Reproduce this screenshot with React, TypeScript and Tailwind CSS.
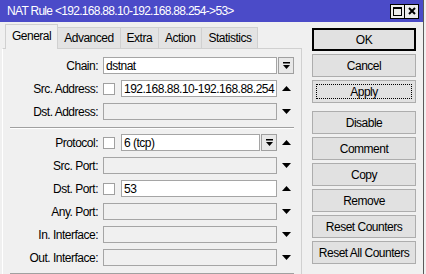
const Up = () => (
  <svg width="9" height="5" viewBox="0 0 9 5">
    <path d="M4.5 0L9 5H0z" fill="#000" />
  </svg>
);

const Down = () => (
  <svg width="9" height="5" viewBox="0 0 9 5">
    <path d="M0 0H9L4.5 5z" fill="#000" />
  </svg>
);

const DropBtn = () => (
  <div className="w-[16px] h-[17px] ml-[1px] border border-[#a0a0a0] bg-[#e8e8e8] flex items-center justify-center shrink-0">
    <svg width="7" height="8" viewBox="0 0 7 8">
      <rect x="0" y="0" width="7" height="1.5" fill="#000" />
      <path d="M0 3H7L3.5 7z" fill="#000" />
    </svg>
  </div>
);

type RowProps = {
  label: string;
  check?: boolean;
  value?: string;
  disabled?: boolean;
  drop?: boolean;
  side?: "up" | "down" | "drop";
};

const Row = ({ label, check, value, disabled, drop, side }: RowProps) => (
  <div className="flex items-center h-[17px]">
    <div className="w-[95px] text-right whitespace-nowrap">{label}</div>
    <div className="ml-[5px] w-[174px] h-[17px] flex items-center">
      {check && (
        <div className="w-[12px] h-[12px] mr-[6px] border border-[#a0a0a0] bg-white shrink-0" />
      )}
      <div
        className={`flex-1 h-[17px] border border-[#a5a5a5] pl-[2px] flex items-center whitespace-nowrap overflow-hidden ${
          disabled ? "bg-[#f0f0f0]" : "bg-white"
        }`}
      >
        {value}
      </div>
      {drop && <DropBtn />}
    </div>
    {side === "drop" ? (
      <DropBtn />
    ) : (
      <div className="pl-[5px] flex items-center">
        {side === "up" ? <Up /> : <Down />}
      </div>
    )}
  </div>
);

const Separator = () => (
  <div className="ml-[7px] mt-[7px] w-[284px] h-0 border-t border-b border-t-[#a0a0a0] border-b-white" />
);

const Btn = ({ children, kind }: { children: string; kind?: "default" | "focus" }) => (
  <div
    className={`h-[23px] bg-[#e1e1e1] flex items-center justify-center ${
      kind === "default"
        ? "border border-black shadow-[inset_0_0_0_1px_#000]"
        : "border border-[#adadad]"
    }`}
  >
    {kind === "focus" ? (
      <div className="w-[96px] h-[15px] border border-dotted border-black flex items-center justify-center">
        {children}
      </div>
    ) : (
      children
    )}
  </div>
);

const tabs = ["Advanced", "Extra", "Action", "Statistics"];

export default function App() {
  return (
    <div className="w-[426px] h-[274px] bg-[#f0f0f0] overflow-hidden font-['Liberation_Sans',Arial,sans-serif] text-[12px] tracking-[-0.5px] text-black">
      <div className="w-[424px] h-full border-r border-[#5a5a5a] flex flex-col">
        {/* title bar */}
        <div className="h-[22px] bg-[#4b4bc8] flex items-center pl-[7px] pr-[4px] shrink-0">
          <span className="flex-1 text-white tracking-[-0.7px] whitespace-nowrap">
            NAT Rule &lt;192.168.88.10-192.168.88.254-&gt;53&gt;
          </span>
          <div className="flex h-[15px] border border-black">
            <div className="w-[13px] bg-[#ececec] flex items-center justify-center">
              <svg width="9" height="9" viewBox="0 0 9 9">
                <rect x="0.5" y="0.5" width="8" height="8" fill="none" stroke="#000" />
                <rect x="0" y="0" width="9" height="2" fill="#000" />
              </svg>
            </div>
            <div className="w-[14px] bg-[#ececec] border-l border-black flex items-center justify-center">
              <svg width="8" height="8" viewBox="0 0 8 8">
                <path d="M1 1L7 7M7 1L1 7" stroke="#000" strokeWidth="2" />
              </svg>
            </div>
          </div>
        </div>

        <div className="flex flex-1">
          {/* left: tabs + panel */}
          <div className="w-[302px] pt-[2px] pl-[2px]">
            <div className="flex items-end h-[24px] pl-[3px]">
              <div className="relative z-10 h-[25px] -mb-px px-[6px] border border-b-0 border-[#d0d0d0] bg-[#f0f0f0] flex items-center pb-[3px]">
                General
              </div>
              {tabs.map((t) => (
                <div
                  key={t}
                  className="h-[21px] px-[6px] border border-b-0 border-l-0 border-[#d0d0d0] bg-[#e3e3e3] flex items-center"
                >
                  {t}
                </div>
              ))}
            </div>
            <div className="w-[300px] h-[240px] border-t border-l border-r border-[#d0d0d0] border-l-white">
              <div className="flex flex-col gap-[6px] pt-[8px]">
                <Row label="Chain:" value="dstnat" side="drop" />
                <Row label="Src. Address:" check value="192.168.88.10-192.168.88.254" side="up" />
                <Row label="Dst. Address:" disabled side="down" />
              </div>
              <Separator />
              <div className="flex flex-col gap-[6px] mt-[5px]">
                <Row label="Protocol:" check value="6 (tcp)" drop side="up" />
                <Row label="Src. Port:" disabled side="down" />
                <Row label="Dst. Port:" check value="53" side="up" />
                <Row label="Any. Port:" disabled side="down" />
                <Row label="In. Interface:" disabled side="down" />
                <Row label="Out. Interface:" disabled side="down" />
              </div>
              <Separator />
            </div>
          </div>

          {/* right: buttons */}
          <div className="ml-[10px] w-[104px] pt-[6px] flex flex-col gap-[3px]">
            <Btn kind="default">OK</Btn>
            <Btn>Cancel</Btn>
            <Btn kind="focus">Apply</Btn>
            <div className="h-[2px]" />
            <Btn>Disable</Btn>
            <Btn>Comment</Btn>
            <Btn>Copy</Btn>
            <Btn>Remove</Btn>
            <Btn>Reset Counters</Btn>
            <Btn>Reset All Counters</Btn>
          </div>
        </div>
      </div>
    </div>
  );
}
